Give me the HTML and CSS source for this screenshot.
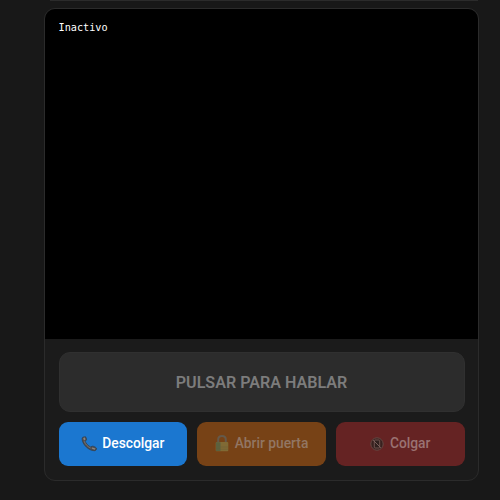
FILE: index.html
```html
<!DOCTYPE html>
<html lang="es">
<head>
<meta charset="utf-8">
<title>Portero</title>
<link rel="stylesheet" href="styles.css">
</head>
<body>
<div class="previous"></div>
<main class="card">
  <section class="video"><span class="status">Inactivo</span></section>
  <section class="controls">
    <button class="btn talk" disabled>PULSAR PARA HABLAR</button>
    <div class="row">
      <button class="btn answer">
        <svg class="icon phone" viewBox="0 0 18 17"><path d="M2 1.2 4.6.7c.9.5 1.4 2.3 1.2 3.5L4.4 5.6c1 2.6 3.2 4.9 5.9 6.1l1.4-.9c1.5-.1 3.8.9 4.7 2.1.3 1.2-.5 2.4-1.7 2.7-5.7.5-12.8-5.8-13.5-11.7C1 2.800 1.200 1.700 2 1.200Z" fill="#4c4d51" stroke="#343c47" stroke-width=".7"/><path d="M2.300 2.200 4.200 1.500 4.700 3.800 3.100 4.700ZM11.900 12.100l3.500 1.300-.9 1.300-3.200-1.400Z" fill="#8b847f"/><path d="M3.300 5.500c1.300 3.300 3.600 5.800 6.900 7.200" fill="none" stroke="#85807d" stroke-width=".8"/></svg>
        <span>Descolgar</span>
      </button>
      <button class="btn open" disabled>
        <svg class="icon lock" viewBox="0 0 14 17"><path d="M3.200 8V4.600C3.200 2.300 4.800 1 7 1s3.800 1.300 3.800 3.600V8" fill="none" stroke="#65594a" stroke-width="2"/><rect x=".7" y="7" width="12.600" height="9.300" rx="1" fill="#806a35"/><path d="M1 7.300h4.500v8.700H1z" fill="#5b613e"/><path d="M1 12h12M1 14.300h12" stroke="#6b5f38" stroke-width=".5"/></svg>
        <span>Abrir puerta</span>
      </button>
      <button class="btn hang" disabled>
        <svg class="icon off" viewBox="0 0 14 14"><circle cx="7" cy="7" r="6.200" fill="#38211f" stroke="#674944" stroke-width="1"/><rect x="4.300" y="3" width="5.400" height="8" rx=".7" fill="#30201e" stroke="#7d605b" stroke-width=".8"/><path d="M3.200 3.200l7.600 7.600" stroke="#806762" stroke-width=".9"/></svg>
        <span>Colgar</span>
      </button>
    </div>
  </section>
</main>
</body>
</html>
```
FILE: styles.css
```css
* { box-sizing: border-box; }
html { background: #181818; }
body {
  margin: 0;
  height: 500px;
  overflow: hidden;
  padding: 0 22px 0 44px;
  font-family: Roboto, "Liberation Sans", sans-serif;
}
.previous { height: 1px; margin: 0 0 7px 6px; background: #2b2b2b; }
.card {
  width: 435px;
  height: 473px;
  border: 1px solid #2b2b2b;
  border-radius: 11px;
  background: #1b1b1b;
  overflow: hidden;
}
.video { height: 330px; padding: 11px 13.5px; background: #000; }
.status {
  display: block;
  color: #fff;
  font: 10.2px/15px "DejaVu Sans Mono", monospace;
}
.controls {
  display: flex;
  flex-direction: column;
  gap: 10px;
  padding: 13px 13.5px 14px;
}
.btn {
  display: flex;
  align-items: center;
  justify-content: center;
  border: 0;
  padding: 0 0 1px;
  font-family: inherit;
  font-size: 13.8px;
  font-weight: 500;
}
.talk {
  height: 60px;
  padding: 1px 0 0;
  border: 1px solid #303030;
  border-radius: 11px;
  background: #2c2c2c;
  color: #7c7c7c;
  font-size: 16.1px;
  font-weight: 600;
}
.row { display: grid; grid-template-columns: repeat(3, 1fr); gap: 10px; }
.row .btn { height: 44px; border-radius: 9px; }
.row span { margin-top: -2px; }
.answer { background: #1b77d0; color: #fff; }
.open { background: #774216; color: #927663; }
.hang { background: #652323; color: #9a7272; }
.icon { flex: none; margin-right: 4px; }
.phone { width: 17px; height: 16px; }
.lock { width: 14px; height: 17px; margin-right: 6px; }
.off { width: 14px; height: 14px; margin-right: 6px; }
```
